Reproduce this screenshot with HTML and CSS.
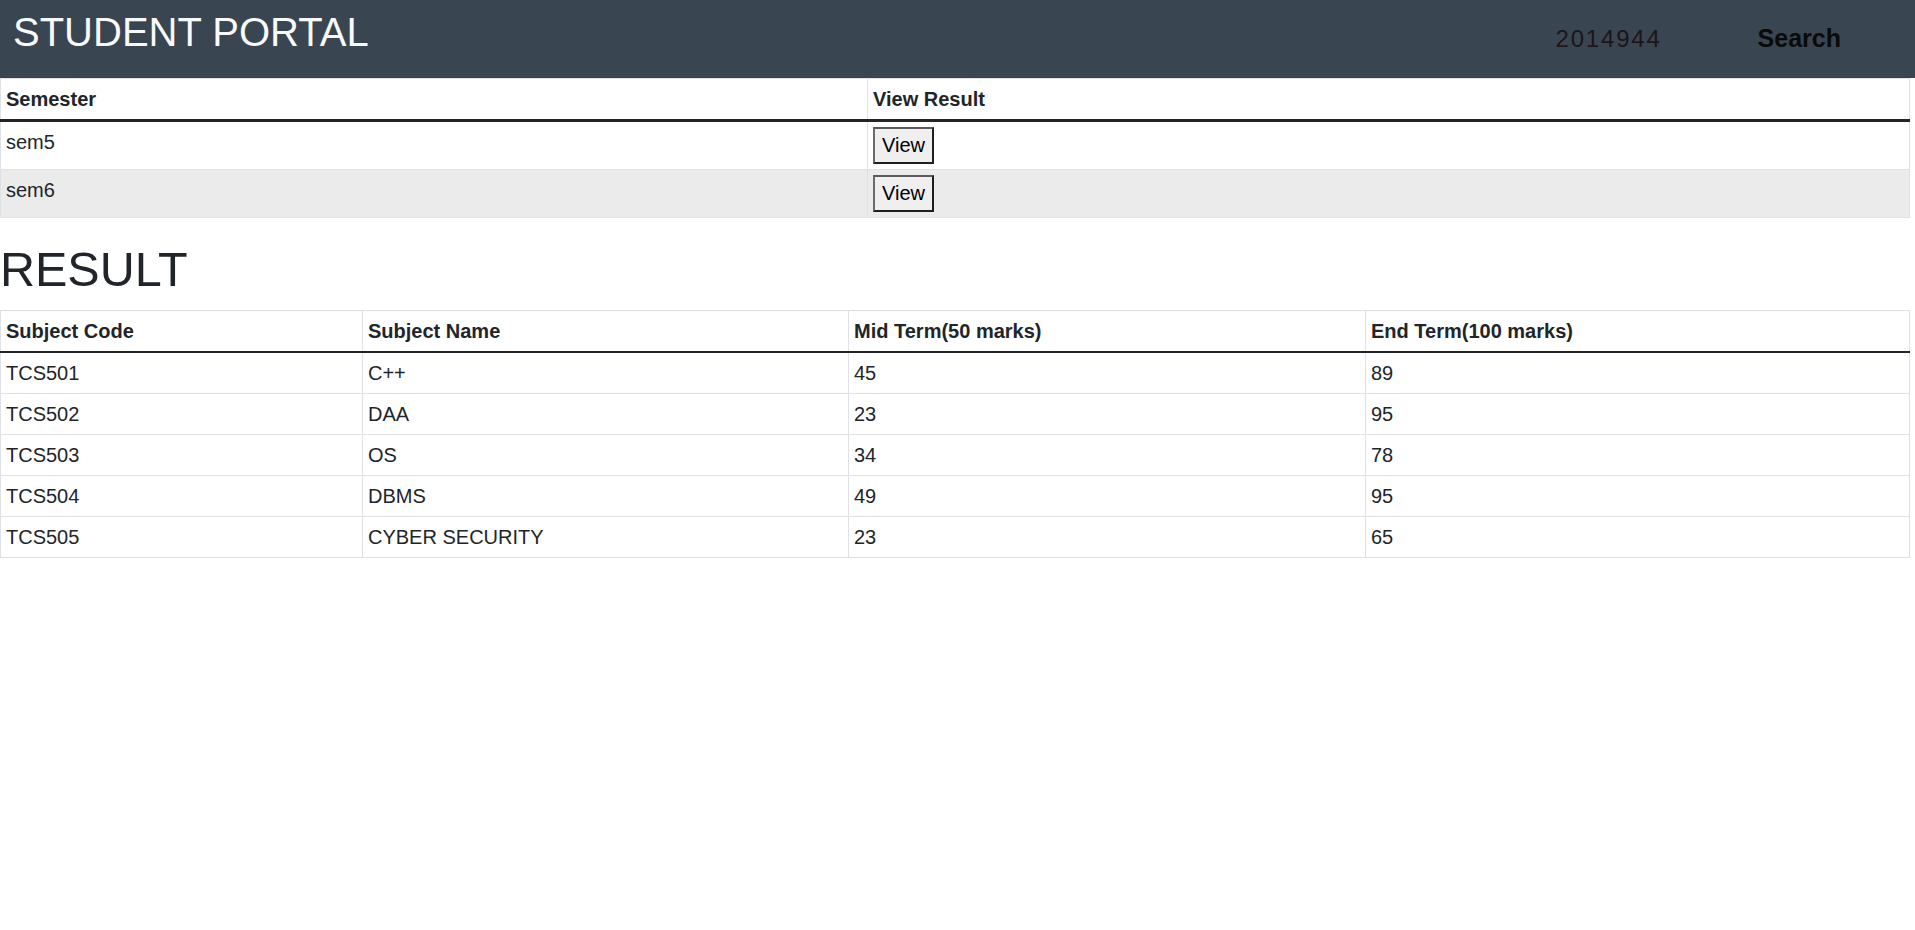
FILE: index.html
```html
<!DOCTYPE html>
<html lang="en">
<head>
<meta charset="utf-8">
<title>Student Portal</title>
<link rel="stylesheet" href="styles.css">
</head>
<body>
<header class="navbar">
  <div class="brand">STUDENT PORTAL</div>
  <div class="nav-right">
    <span class="roll">2014944</span>
    <span class="search">Search</span>
  </div>
</header>

<table class="tbl sem-tbl">
  <colgroup><col class="c-sem"><col></colgroup>
  <thead>
    <tr><th>Semester</th><th>View Result</th></tr>
  </thead>
  <tbody>
    <tr><td>sem5</td><td><button class="btn-view">View</button></td></tr>
    <tr class="striped"><td>sem6</td><td><button class="btn-view">View</button></td></tr>
  </tbody>
</table>

<h1 class="result-title">RESULT</h1>

<table class="tbl res-tbl">
  <colgroup><col class="c1"><col class="c2"><col class="c3"><col></colgroup>
  <thead>
    <tr><th>Subject Code</th><th>Subject Name</th><th>Mid Term(50 marks)</th><th>End Term(100 marks)</th></tr>
  </thead>
  <tbody>
    <tr><td>TCS501</td><td>C++</td><td>45</td><td>89</td></tr>
    <tr><td>TCS502</td><td>DAA</td><td>23</td><td>95</td></tr>
    <tr><td>TCS503</td><td>OS</td><td>34</td><td>78</td></tr>
    <tr><td>TCS504</td><td>DBMS</td><td>49</td><td>95</td></tr>
    <tr><td>TCS505</td><td>CYBER SECURITY</td><td>23</td><td>65</td></tr>
  </tbody>
</table>
</body>
</html>
```
FILE: styles.css
```css
html, body {
  margin: 0;
  padding: 0;
  background: #fff;
}
body {
  font-family: "Liberation Sans", Arial, sans-serif;
  font-size: 20px;
  line-height: 1.5;
  color: #212529;
}
.navbar {
  display: flex;
  align-items: flex-start;
  height: 78px;
  background: #394551;
  padding: 0 74px 0 13px;
  box-sizing: border-box;
}
.brand {
  font-size: 40px;
  line-height: 1.2;
  color: #f8f9fa;
  padding-top: 8px;
}
.nav-right {
  margin-left: auto;
  display: flex;
  align-items: flex-start;
  gap: 96px;
}
.roll {
  font-size: 24px;
  line-height: 1.15;
  letter-spacing: 1.8px;
  color: #1d1518;
  padding-top: 25px;
}
.search {
  font-size: 25px;
  line-height: 1.15;
  font-weight: bold;
  color: #0a0a0a;
  padding-top: 24px;
}
.tbl {
  width: calc(100% - 5px);
  border-collapse: collapse;
  table-layout: fixed;
}
.tbl th, .tbl td {
  border: 1px solid #dee2e6;
  padding: 5px 5px;
  text-align: left;
  vertical-align: top;
  line-height: 30px;
}
.tbl th {
  font-weight: bold;
}
.tbl thead th {
  border-bottom: 2px solid #212529;
}
.sem-tbl thead th {
  border-bottom-width: 3px;
}
.tbl tr.striped td {
  background: #ebebeb;
}
.sem-tbl .c-sem { width: 867px; }
.res-tbl .c1 { width: 362px; }
.res-tbl .c2 { width: 486px; }
.res-tbl .c3 { width: 517px; }
.btn-view {
  font-family: "Liberation Sans", Arial, sans-serif;
  font-size: 20px;
  line-height: 23px;
  color: #000;
  background: #efefef;
  border-style: solid;
  border-width: 2px;
  border-color: #5a5a5a #1e1e1e #1e1e1e #6a6a6a;
  padding: 5px 7px;
  margin: 0;
  display: block;
}
.result-title {
  font-size: 48.5px;
  font-weight: normal;
  line-height: 1.2;
  margin: 22px 0 12px 0;
  color: #212529;
}
```
